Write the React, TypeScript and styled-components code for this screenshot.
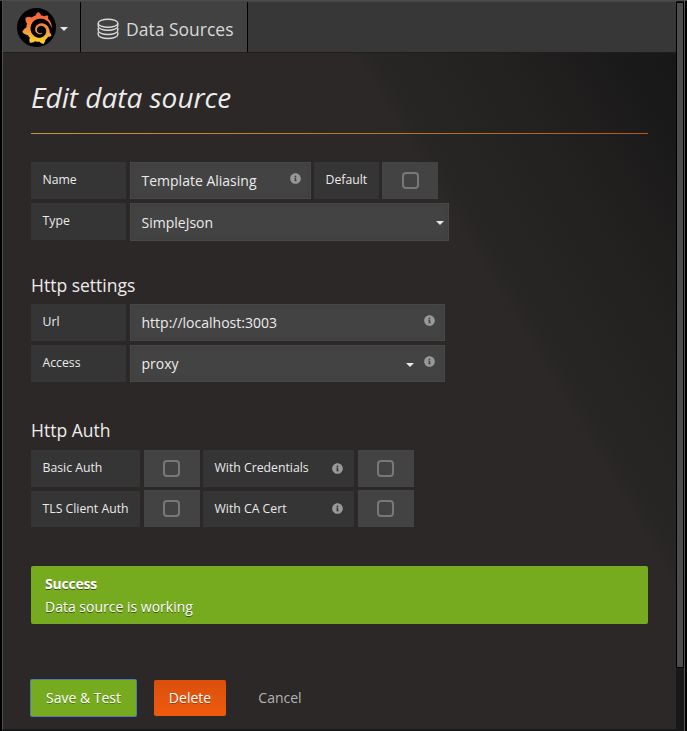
import React from 'react';
import styled, { createGlobalStyle } from 'styled-components';
import { FaInfoCircle } from 'react-icons/fa';
import { SiGrafana } from 'react-icons/si';

const GlobalStyle = createGlobalStyle`
  *, *::before, *::after { box-sizing: border-box; }
  body {
    margin: 0;
    background: #000;
    font: 14px/21px "Open Sans", "Noto Sans", sans-serif;
    color: #ebebeb;
    overflow: hidden;
  }
`;

const Window = styled.div`
  display: flex;
  width: 687px;
  height: 731px;
  padding-left: 2px;
  padding-right: 2px;
  border-top: 1px solid #4b4c44;
  background: #000;
`;

const Main = styled.div`
  display: flex;
  flex-direction: column;
  width: 674px;
  border-left: 1px solid #505050;
  border-bottom: 2px solid #181818;
`;

const Navbar = styled.header`
  display: flex;
  height: 52px;
  flex: none;
  background: #373737;
  border-top: 1px solid #444;
  border-bottom: 1px solid #1f1d1d;
`;

const NavItem = styled.div<{ $width: number; $gap: number; $left: number; $top: number }>`
  display: flex;
  align-items: center;
  width: ${(p) => p.$width}px;
  gap: ${(p) => p.$gap}px;
  padding-left: ${(p) => p.$left}px;
  padding-top: ${(p) => p.$top}px;
  background: #414141;
  border-right: 1px solid #000;
`;

const LogoDisc = styled.span`
  display: flex;
  align-items: center;
  justify-content: center;
  width: 39px;
  height: 39px;
  border-radius: 50%;
  background: #000;
  svg { width: 32px; height: 32px; overflow: visible; }
  svg path { fill: url(#logoFill); }
`;

const HiddenDefs = styled.svg`
  position: absolute;
  width: 0;
  height: 0;
`;

const Caret = styled.span<{ $down?: number }>`
  flex: none;
  width: 0;
  height: 0;
  margin-top: ${(p) => p.$down ?? 0}px;
  border: 4px solid transparent;
  border-top-color: #e8e8e8;
  border-bottom: 0;
`;

const NavTitle = styled.span`
  font-size: 17.5px;
  line-height: 24px;
  color: #d8d9da;
`;

const Content = styled.main`
  flex: 1;
  padding: 27px 28px 0;
  background: linear-gradient(59deg, #2b2827 70%, #282625 72%, #232120 84%, #1b1a1a 94%, #171717 100%);
`;

const PageTitle = styled.h1`
  margin: 0;
  height: 53px;
  font-size: 28px;
  font-weight: 400;
  font-style: italic;
  line-height: 35px;
  color: #ececec;
`;

const Divider = styled.div`
  height: 1px;
  width: 617px;
  background: linear-gradient(90deg, #c59a35, #b5591f);
`;

const Section = styled.section<{ $top: number }>`
  margin-top: ${(p) => p.$top}px;
`;

const SectionTitle = styled.h3`
  margin: 0;
  height: 30px;
  font-size: 17.5px;
  font-weight: 400;
  line-height: 23px;
  color: #ececec;
`;

const Row = styled.div`
  display: flex;
  height: 41px;
`;

const Label = styled.label<{ $width: number; $gap?: number; $top?: number; $height?: number }>`
  display: flex;
  align-items: center;
  justify-content: space-between;
  flex: none;
  width: ${(p) => p.$width}px;
  height: ${(p) => p.$height ?? 37}px;
  margin-top: ${(p) => p.$top ?? 0}px;
  margin-right: ${(p) => p.$gap ?? 4}px;
  padding: 0 11px 2px 11.5px;
  font-size: 12.25px;
  white-space: nowrap;
  background: #353535;
`;

const Field = styled.div<{ $width: number; $height?: number; $right?: number }>`
  display: flex;
  align-items: center;
  flex: none;
  width: ${(p) => p.$width}px;
  height: ${(p) => p.$height ?? 37}px;
  padding: 0 ${(p) => p.$right ?? 9}px 0 10.5px;
  white-space: nowrap;
  background: #434343;
  border: 1px solid #484848;
  box-shadow: inset 0 0 4px #3e3e3e;
`;

const Value = styled.span`
  flex: 1;
`;

const Info = styled(FaInfoCircle)<{ $up?: boolean; $left?: number }>`
  flex: none;
  width: 11px;
  height: 11px;
  margin-top: ${(p) => (p.$up ? -4 : 1)}px;
  margin-left: ${(p) => p.$left ?? 0}px;
  color: #999;
`;

const CheckCell = styled.div<{ $gap?: number; $top?: number; $shift?: number }>`
  display: flex;
  align-items: center;
  justify-content: center;
  flex: none;
  width: 56px;
  height: 37px;
  margin-top: ${(p) => p.$top ?? 0}px;
  margin-right: ${(p) => p.$gap ?? 0}px;
  padding-left: ${(p) => p.$shift ?? 0}px;
  padding-right: ${(p) => (p.$shift ? 0 : 1)}px;
  background: #434343;
`;

const Box = styled.span`
  width: 17px;
  height: 17px;
  border: 2px solid #787878;
  border-radius: 4px;
`;

const Spacer = styled.span<{ $width: number }>`
  flex: none;
  width: ${(p) => p.$width}px;
`;

const Alert = styled.div`
  width: 617px;
  height: 58px;
  margin-top: 35px;
  padding: 7px 14px;
  border-radius: 2px;
  line-height: 23px;
  color: #fff;
  text-shadow: 0 1px 0 rgba(0, 0, 0, 0.5);
  background: #77ab1f;
`;

const AlertTitle = styled.div`
  font-weight: 700;
  letter-spacing: -0.2px;
  line-height: 22px;
`;

const Actions = styled.div`
  display: flex;
  margin-top: 56px;
`;

const Button = styled.button<{ $kind: 'save' | 'delete' | 'link' }>`
  height: 36px;
  padding: 0 0 1px;
  border: 0;
  border-radius: ${(p) => (p.$kind === 'save' ? 1 : 2)}px;
  font: 14px/21px "Open Sans", "Noto Sans", sans-serif;
  width: ${(p) => ({ save: 105, delete: 72, link: 108 })[p.$kind]}px;
  margin-right: ${(p) => (p.$kind === 'save' ? 18 : 0)}px;
  color: ${(p) => (p.$kind === 'link' ? '#b3b3b3' : '#fff')};
  text-shadow: ${(p) => (p.$kind === 'link' ? 'none' : '0 1px 0 rgba(0,0,0,0.3)')};
  background: ${(p) =>
    ({ save: '#77ab1f', delete: 'linear-gradient(#d9500c, #f05a0e)', link: 'transparent' })[p.$kind]};
  box-shadow: ${(p) => (p.$kind === 'save' ? '0 0 0 1px #4d7db3' : 'none')};
`;

const ScrollTrack = styled.aside`
  width: 9px;
  height: 730px;
  padding-top: 1px;
  background: #181818;
  border-right: 1px solid #555;
`;

const ScrollThumb = styled.div`
  height: 666px;
  background: #4c4c4c;
  border: 1px solid #000;
`;

function DatabaseIcon() {
  return (
    <svg width="22" height="22" viewBox="0 0 22 22" fill="none" stroke="#d8d9da" strokeWidth="1.4">
      <ellipse cx="11" cy="5.2" rx="9.8" ry="4" />
      <path d="M1.2 5.2v3.1c0 2.3 4.4 4 9.8 4s9.8-1.7 9.8-4V5.2" />
      <path d="M1.2 10v2.5c0 2.3 4.4 4 9.8 4s9.8-1.7 9.8-4V10" />
      <path d="M1.2 14.3v2.2c0 2.3 4.4 4 9.8 4s9.8-1.7 9.8-4v-2.2" />
    </svg>
  );
}

function Checkbox({ gap, top, shift }: { gap?: number; top?: number; shift?: number }) {
  return (
    <CheckCell $gap={gap} $top={top} $shift={shift} role="checkbox" aria-checked={false}>
      <Box />
    </CheckCell>
  );
}

export default function App() {
  return (
    <>
      <GlobalStyle />
      <HiddenDefs aria-hidden="true">
        <linearGradient id="logoFill" x1="0" y1="0" x2="0" y2="1">
          <stop offset="0.1" stopColor="#f5643b" />
          <stop offset="0.55" stopColor="#f99238" />
          <stop offset="1" stopColor="#ffdc2e" />
        </linearGradient>
      </HiddenDefs>
      <Window>
        <Main>
          <Navbar>
            <NavItem $width={78} $gap={4} $left={14} $top={1}>
              <LogoDisc><SiGrafana /></LogoDisc>
              <Caret $down={2} />
            </NavItem>
            <NavItem $width={167} $gap={7} $left={16} $top={4}>
              <DatabaseIcon />
              <NavTitle>Data Sources</NavTitle>
            </NavItem>
          </Navbar>
          <Content>
            <PageTitle>Edit data source</PageTitle>
            <Divider />
            <Section $top={28}>
              <Row>
                <Label $width={95}>Name</Label>
                <Field $width={181}>
                  <Value>Template Aliasing</Value>
                  <Info $up />
                </Field>
                <Spacer $width={3} />
                <Label $width={65} $gap={3}>Default</Label>
                <Checkbox shift={1} />
              </Row>
              <Row>
                <Label $width={95}>Type</Label>
                <Field $width={319} $height={38} $right={4}>
                  <Value>SimpleJson</Value>
                  <Caret $down={2} />
                </Field>
              </Row>
            </Section>
            <Section $top={30}>
              <SectionTitle>Http settings</SectionTitle>
              <Row>
                <Label $width={95}>Url</Label>
                <Field $width={315}>
                  <Value>http://localhost:3003</Value>
                  <Info $up />
                </Field>
              </Row>
              <Row>
                <Label $width={95}>Access</Label>
                <Field $width={315}>
                  <Value>proxy</Value>
                  <Caret $down={2} />
                  <Info $up $left={10} />
                </Field>
              </Row>
            </Section>
            <Section $top={33}>
              <SectionTitle>Http Auth</SectionTitle>
              <Row>
                <Label $width={109} $top={1}>Basic Auth</Label>
                <Checkbox gap={3} top={1} />
                <Label $width={151} $top={1}>With Credentials<Info /></Label>
                <Checkbox top={1} />
              </Row>
              <Row>
                <Label $width={109} $top={1} $height={36}>TLS Client Auth</Label>
                <Checkbox gap={3} />
                <Label $width={151} $top={1} $height={36}>With CA Cert<Info /></Label>
                <Checkbox />
              </Row>
            </Section>
            <Alert>
              <AlertTitle>Success</AlertTitle>
              <div>Data source is working</div>
            </Alert>
            <Actions>
              <Button $kind="save">Save &amp; Test</Button>
              <Button $kind="delete">Delete</Button>
              <Button $kind="link">Cancel</Button>
            </Actions>
          </Content>
        </Main>
        <ScrollTrack>
          <ScrollThumb />
        </ScrollTrack>
      </Window>
    </>
  );
}
